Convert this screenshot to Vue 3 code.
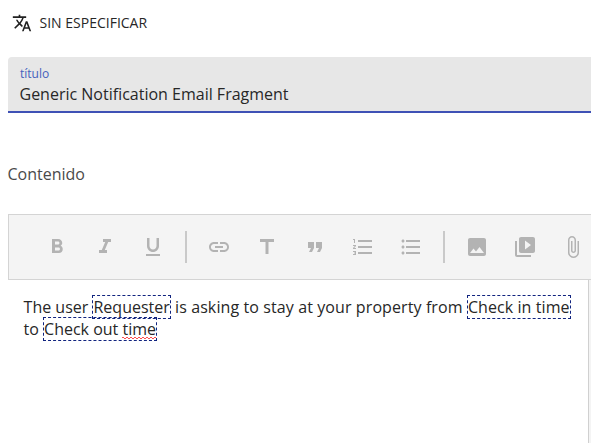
<script setup>
const groups = [
  [
    { name: 'bold', d: 'M15.6 10.79c.97-.67 1.65-1.77 1.65-2.79 0-2.26-1.75-4-4-4H7v14h7.04c2.09 0 3.71-1.7 3.71-3.79 0-1.52-.86-2.82-2.15-3.42zM10 6.5h3c.83 0 1.5.67 1.5 1.5s-.67 1.5-1.5 1.5h-3v-3zm3.5 9H10v-3h3.5c.83 0 1.5.67 1.5 1.5s-.67 1.5-1.5 1.5z' },
    { name: 'italic', d: 'M10 4v3h2.21l-3.42 8H6v3h8v-3h-2.21l3.42-8H18V4z' },
    { name: 'underline', d: 'M12 17c3.31 0 6-2.69 6-6V3h-2.500v8c0 1.930-1.570 3.500-3.500 3.500S8.500 12.930 8.500 11V3H6v8c0 3.310 2.690 6 6 6zm-7 2v2h14v-2H5z' },
  ],
  [
    { name: 'link', d: 'M3.900 12c0-1.710 1.390-3.100 3.100-3.100h4V7H7c-2.760 0-5 2.240-5 5s2.240 5 5 5h4v-1.900H7c-1.710 0-3.100-1.390-3.100-3.100zM8 13h8v-2H8v2zm9-6h-4v1.900h4c1.710 0 3.100 1.390 3.100 3.100s-1.390 3.100-3.100 3.100h-4V17h4c2.760 0 5-2.240 5-5s-2.240-5-5-5z' },
    { name: 'title', d: 'M5 4v3h5.500v12h3V7H19V4z' },
    { name: 'quote', d: 'M6 17h3l2-4V7H5v6h3zm8 0h3l2-4V7h-6v6h3z' },
    { name: 'numbered list', d: 'M2 17h2v.5H3v1h1v.5H2v1h3v-4H2v1zm1-9h1V4H2v1h1v3zm-1 3h1.800L2 13.100v.9h3v-1H3.200L5 10.900V10H2v1zm5-6v2h14V5H7zm0 14h14v-2H7v2zm0-6h14v-2H7v2z' },
    { name: 'bulleted list', d: 'M4 10.500c-.83 0-1.500.67-1.500 1.500s.67 1.500 1.500 1.500 1.500-.67 1.500-1.500-.67-1.500-1.500-1.500zm0-6c-.83 0-1.500.67-1.500 1.500S3.170 7.500 4 7.500 5.500 6.830 5.500 6 4.830 4.500 4 4.500zm0 12c-.83 0-1.500.68-1.500 1.500s.68 1.500 1.500 1.500 1.500-.68 1.500-1.500-.67-1.500-1.500-1.500zM7 19h14v-2H7v2zm0-6h14v-2H7v2zm0-8v2h14V5H7z' },
  ],
  [
    { name: 'image', d: 'M21 19V5c0-1.100-.9-2-2-2H5c-1.100 0-2 .9-2 2v14c0 1.100.9 2 2 2h14c1.100 0 2-.9 2-2zM8.500 13.500l2.500 3.010L14.500 12l4.500 6H5l3.500-4.500z' },
    { name: 'video', d: 'M4 6H2v14c0 1.100.9 2 2 2h14v-2H4V6zm16-4H8c-1.100 0-2 .9-2 2v12c0 1.100.9 2 2 2h12c1.100 0 2-.9 2-2V4c0-1.100-.9-2-2-2zm-8 12.500v-9l6 4.500-6 4.500z' },
    { name: 'attachment', d: 'M16.500 6v11.500c0 2.210-1.790 4-4 4s-4-1.790-4-4V5c0-1.380 1.120-2.500 2.500-2.500s2.500 1.120 2.500 2.500v10.500c0 .55-.45 1-1 1s-1-.45-1-1V6H10v9.500c0 1.380 1.120 2.500 2.500 2.500s2.500-1.120 2.500-2.500V5c0-2.210-1.790-4-4-4S7 2.790 7 5v12.500c0 3.040 2.460 5.500 5.500 5.500s5.500-2.460 5.500-5.500V6h-1.500z' },
  ],
]
</script>

<template>
  <main class="page">
    <header class="language">
      <svg class="translate" viewBox="0 0 24 24"><path d="M12.870 15.070l-2.540-2.510.03-.03c1.740-1.940 2.980-4.170 3.710-6.530H17V4h-7V2H8v2H1v1.990h11.170C11.500 7.920 10.440 9.750 9 11.350 8.070 10.320 7.300 9.190 6.690 8h-2c.73 1.630 1.730 3.170 2.980 4.560l-5.090 5.020L4 19l5-5 3.110 3.110.76-2.040zM18.500 10h-2L12 22h2l1.120-3h4.750L21 22h2l-4.500-12zm-2.620 7l1.620-4.330L19.120 17h-3.240z" /></svg>
      <span class="language-name">SIN ESPECIFICAR</span>
    </header>
    <div class="field">
      <label class="label">título</label>
      <div class="value">Generic Notification Email Fragment</div>
    </div>
    <div class="heading">Contenido</div>
    <section class="editor">
      <div class="toolbar">
        <template v-for="(group, i) in groups" :key="i">
          <span v-if="i" class="separator"></span>
          <button v-for="icon in group" :key="icon.name" class="tool" :aria-label="icon.name">
            <svg viewBox="0 0 24 24"><path :d="icon.d" /></svg>
          </button>
        </template>
      </div>
      <div class="body">
        <p class="text">The user <span class="token">Requester</span><span class="phrase"> is asking to stay at your property from </span><span class="token check-in">Check in time</span> to <span class="token">Check out <span class="misspelt">time</span></span></p>
        <div class="gutter"></div>
      </div>
    </section>
  </main>
</template>

<style>
body {
  margin: 0;
  overflow: hidden;
}
</style>

<style scoped>
.page {
  box-sizing: border-box;
  width: 591px;
  height: 443px;
  padding-left: 8px;
  overflow: hidden;
  display: flex;
  flex-direction: column;
  background: #fff;
  color: #272727;
  font-family: "Open Sans", sans-serif;
  font-size: 16px;
}
.language {
  height: 46px;
  flex: none;
  display: flex;
  align-items: center;
  gap: 7.5px;
  padding-left: 4px;
  font-size: 14px;
}
.language-name {
  padding-bottom: 2px;
}
.translate {
  width: 20px;
  height: 20px;
  fill: #212121;
}
.field {
  box-sizing: border-box;
  flex: none;
  height: 56px;
  margin-top: 11px;
  padding: 8px 11.5px 0;
  background: #e7e7e7;
  border-bottom: 2px solid #3f51b5;
  border-top-left-radius: 4px;
}
.label {
  display: block;
  padding-left: 0.5px;
  font-size: 12px;
  line-height: 17px;
  color: #4561bd;
}
.value {
  line-height: 24px;
}
.heading {
  flex: none;
  margin-top: 49px;
  margin-left: -0.5px;
  line-height: 24px;
  color: #4a4a4a;
}
.editor {
  flex: 1;
  margin-top: 28px;
  display: flex;
  flex-direction: column;
}
.toolbar {
  flex: none;
  height: 64px;
  display: flex;
  align-items: center;
  padding-left: 24px;
  background: #f4f4f4;
  border: 1px solid #d4d4d4;
  border-right: 0;
  overflow: hidden;
}
.tool {
  flex: none;
  width: 48px;
  height: 48px;
  padding: 12px;
  border: 0;
  background: none;
}
.tool svg {
  display: block;
  width: 24px;
  height: 24px;
  fill: #b3b3b3;
}
.separator {
  flex: none;
  width: 2px;
  height: 32px;
  margin: 0 8px;
  background: #c9c9c9;
}
.body {
  flex: 1;
  display: flex;
}
.text {
  flex: 1;
  margin: 0;
  padding: 16px 8px 0 15.6px;
  line-height: 22px;
}
.phrase {
  letter-spacing: 0.1px;
}
.token {
  border: 1px dashed #10237f;
}
.check-in {
  letter-spacing: 0.08px;
}
.misspelt {
  background-image:
    linear-gradient(90deg, #ff4d4d 2px, transparent 2px),
    linear-gradient(90deg, transparent 2px, #ff4d4d 2px);
  background-size: 4px 1px;
  background-position: 0 19px, 0 20px;
  background-repeat: repeat-x;
}
.gutter {
  flex: none;
  width: 2px;
  background: #f4f4f4;
  border-left: 1px solid #d0d0d0;
}
</style>
